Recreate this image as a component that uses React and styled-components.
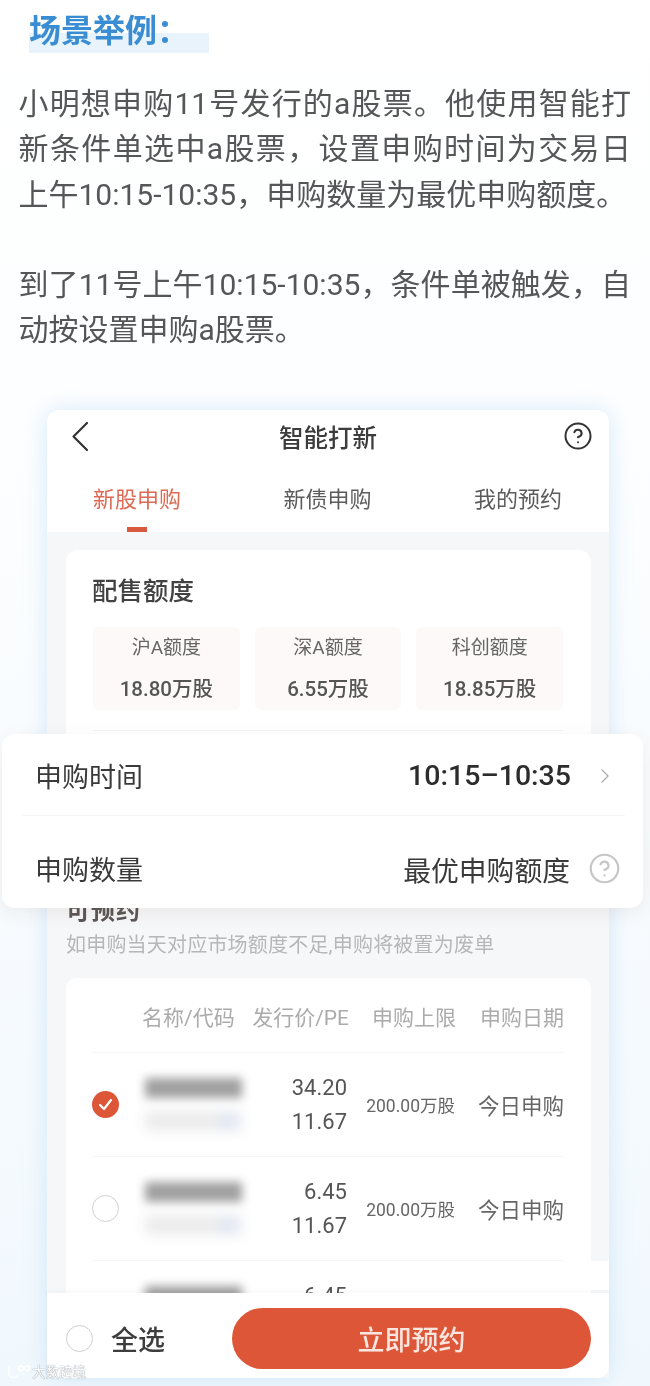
import React from 'react';
import styled, { createGlobalStyle } from 'styled-components';
import { CircleHelp, ChevronRight } from 'lucide-react';

const Global = createGlobalStyle`
  html, body { margin: 0; padding: 0; background: #fff; }
  * { box-sizing: border-box; }
`;

const Page = styled.div`
  position: relative;
  width: 650px;
  height: 1386px;
  overflow: hidden;
  padding-top: 14px;
  font-family: Roboto, "Noto Sans CJK SC", "Noto Sans", sans-serif;
  background: linear-gradient(#ffffff 0, #fdfeff 380px, #f1f8fd 100%);
  filter: blur(0.45px);
`;

const Heading = styled.h2`
  margin: 0 0 0 29px;
  width: 180px;
  height: 39px;
  font-size: 32px;
  line-height: 34px;
  font-weight: 700;
  color: #3a8dd2;
  background: linear-gradient(transparent 19px, #e9f3fb 19px);
`;

const Copy = styled.div`
  margin: 28px 0 0 18.5px;
  width: 612.5px;
  font-size: 30px;
  line-height: 45.3px;
  text-align: justify;
  color: #555658;
`;

const Para = styled.p`
  margin: 0 0 45.3px;
`;

const Phone = styled.div`
  position: relative;
  margin: 57.4px 0 0 47px;
  width: 562px;
  height: 968px;
  display: flex;
  flex-direction: column;
  background: #fff;
  border-radius: 12px;
  box-shadow: 0 0 22px rgba(160, 205, 242, 0.42);
`;

const NavBar = styled.div`
  height: 52px;
  flex: none;
  display: flex;
  align-items: center;
  justify-content: space-between;
  padding: 0 16px 0 24px;
  color: #333;
`;

const NavTitle = styled.div`
  font-size: 24.5px;
  font-weight: 500;
  color: #3c3c3c;
  margin-left: 4px;
`;

const Tabs = styled.div`
  height: 70px;
  flex: none;
  display: flex;
  justify-content: space-between;
  padding: 23px 47px 0 46px;
`;

const Tab = styled.div`
  display: flex;
  flex-direction: column;
  align-items: center;
  gap: 12px;
  font-size: 22px;
  line-height: 30px;
  color: ${p => (p.$active ? '#dc6a55' : '#5c5c5c')};
  &::after {
    content: '';
    width: 20px;
    height: 5px;
    background: ${p => (p.$active ? '#d9593f' : 'transparent')};
  }
`;

const Body = styled.div`
  flex: 1;
  min-height: 0;
  overflow: hidden;
  padding: 18px 18px 0 19px;
  background: #f6f7f9;
`;

const QuotaCard = styled.section`
  height: 330px;
  padding: 24px 28px 0 27px;
  background: #fff;
  border-radius: 12px;
`;

const CardTitle = styled.div`
  font-size: 25.5px;
  line-height: 34px;
  font-weight: 500;
  color: #424242;
  margin-left: -1px;
`;

const QuotaGrid = styled.div`
  margin-top: 19px;
  display: grid;
  grid-template-columns: repeat(3, 1fr);
  gap: 15px;
  padding-bottom: 20px;
  border-bottom: 1px solid #f3f3f3;
`;

const QuotaCell = styled.div`
  height: 83px;
  display: flex;
  flex-direction: column;
  align-items: center;
  gap: 14px;
  padding-top: 7px;
  background: #fef9f9;
  border-radius: 6px;
`;

const QuotaLabel = styled.div`
  font-size: 19px;
  line-height: 27px;
  color: #666;
`;

const QuotaValue = styled.div`
  font-size: 20.5px;
  line-height: 28px;
  font-weight: 500;
  color: #555;
`;

const SectionTitle = styled.div`
  margin-top: 14px;
  font-size: 24px;
  line-height: 34px;
  font-weight: 700;
  color: #5b5555;
  letter-spacing: 1px;
`;

const Note = styled.div`
  margin-top: 3px;
  font-size: 20px;
  line-height: 28px;
  letter-spacing: 0.2px;
  color: #b7b7b7;
`;

const TableCard = styled.section`
  margin-top: 19px;
  background: #fff;
  border-radius: 10px;
  padding: 0 27px 0 26px;
`;

const columns = '50px 105px 102px 107px 108px';

const HeadRow = styled.div`
  height: 75px;
  padding-top: 25px;
  display: grid;
  grid-template-columns: ${columns};
  font-size: 21px;
  line-height: 30px;
  color: #ababab;
  border-bottom: 1px solid #f7f7f7;
`;

const HeadCell = styled.div`
  grid-column: ${p => p.$col};
  text-align: ${p => (p.$left ? 'left' : 'right')};
  white-space: nowrap;
`;

const Row = styled.div`
  height: 104px;
  display: grid;
  grid-template-columns: ${columns};
  align-items: center;
  border-bottom: 1px solid #f5f5f5;
`;

const Radio = styled.span`
  width: 27px;
  height: 27px;
  flex: none;
  display: flex;
  align-items: center;
  justify-content: center;
  border-radius: 50%;
  border: ${p => (p.$checked ? 'none' : '1px solid #cfcfcf')};
  background: ${p => (p.$checked ? '#dc5637' : '#fff')};
`;

const NameBlur = styled.div`
  display: flex;
  flex-direction: column;
  gap: 13px;
  padding: 0 5px 0 3px;
`;

const NameBar = styled.div`
  height: 20px;
  background: #a0a0a0;
  filter: blur(5px);
`;

const CodeBar = styled.div`
  height: 20px;
  background: linear-gradient(90deg, #ececec 70%, #e0e7f5 88%, #eeeeee);
  filter: blur(6px);
`;

const Price = styled.div`
  text-align: right;
  padding-right: 2px;
  font-size: 22px;
  line-height: 34px;
  color: #555;
`;

const Limit = styled.div`
  text-align: right;
  padding-right: 1px;
  font-size: 17.5px;
  color: #666;
  white-space: nowrap;
`;

const DateCell = styled.div`
  text-align: right;
  font-size: 21.5px;
  color: #666;
`;

const BottomBar = styled.div`
  position: absolute;
  left: 0;
  right: 0;
  bottom: 0;
  height: 85px;
  display: flex;
  align-items: center;
  justify-content: space-between;
  padding: 6px 18px 0 19px;
  background: #fff;
  border-radius: 0 0 12px 12px;
  box-shadow: 0 -3px 6px rgba(0, 0, 0, 0.025);
  &::before {
    content: '';
    position: absolute;
    right: 0;
    top: -32px;
    width: 18px;
    height: 29px;
    background: #fff;
  }
`;

const SelectAll = styled.div`
  display: flex;
  align-items: center;
  gap: 18px;
  font-size: 27px;
  font-weight: 500;
  color: #3d3d3d;
`;

const Primary = styled.button`
  width: 359px;
  height: 61px;
  border: 0;
  border-radius: 31px;
  background: #dc5637;
  color: #fbe6df;
  font-family: inherit;
  font-size: 27px;
  font-weight: 500;
`;

const Overlay = styled.div`
  position: absolute;
  left: 2px;
  top: 734px;
  width: 641px;
  height: 174px;
  padding: 0 18px 0 20px;
  background: #fff;
  border-radius: 13px;
  box-shadow: 0 5px 18px rgba(120, 90, 70, 0.09);
`;

const SettingRow = styled.div`
  height: ${p => (p.$first ? '82px' : '92px')};
  display: flex;
  align-items: center;
  padding: ${p => (p.$first ? '2px 0 0 13px' : '13px 4px 0 13px')};
  border-bottom: ${p => (p.$first ? '1px solid #f5f5f5' : 'none')};
  font-size: 27px;
  color: #3a3a3a;
`;

const SettingLabel = styled.div`
  flex: 1;
`;

const SettingValue = styled.div`
  font-size: ${p => (p.$time ? '28.5px' : '27.8px')};
  font-weight: ${p => (p.$time ? 500 : 400)};
  color: ${p => (p.$time ? '#2c2c2c' : '#3a3a3a')};
  margin-right: ${p => (p.$time ? '22px' : '18px')};
`;

const Watermark = styled.div`
  position: absolute;
  left: 7px;
  bottom: 6px;
  display: flex;
  align-items: center;
  gap: 1px;
  font-size: 13.5px;
  line-height: 16px;
  color: #fff;
  text-shadow: 0 0 1px #8f9aa3, 0 0 1px #8f9aa3;
`;

const rows = [
  { checked: true, price: '34.20' },
  { price: '6.45' },
  { price: '6.45' },
];

const Check = () => (
  <svg width="17" height="15" viewBox="0 0 17 15" fill="none">
    <path d="M3 8l4 4L14 3" stroke="#fff" strokeWidth="2.2" strokeLinecap="round" strokeLinejoin="round" />
  </svg>
);

const Back = () => (
  <svg width="18" height="31" viewBox="0 0 18 31" fill="none">
    <path d="M16 2L2.5 15.5 16 29" stroke="#333" strokeWidth="2.2" strokeLinecap="round" strokeLinejoin="round" />
  </svg>
);

export default function App() {
  return (
    <>
      <Global />
      <Page>
        <Heading>场景举例：</Heading>
        <Copy>
          <Para>小明想申购11号发行的a股票。他使用智能打新条件单选中a股票，设置申购时间为交易日上午10:15-10:35，申购数量为最优申购额度。</Para>
          <Para>到了11号上午10:15-10:35，条件单被触发，自动按设置申购a股票。</Para>
        </Copy>
        <Phone>
          <NavBar>
            <Back />
            <NavTitle>智能打新</NavTitle>
            <CircleHelp size={30} strokeWidth={1.6} />
          </NavBar>
          <Tabs>
            <Tab $active>新股申购</Tab>
            <Tab>新债申购</Tab>
            <Tab>我的预约</Tab>
          </Tabs>
          <Body>
            <QuotaCard>
              <CardTitle>配售额度</CardTitle>
              <QuotaGrid>
                <QuotaCell><QuotaLabel>沪A额度</QuotaLabel><QuotaValue>18.80万股</QuotaValue></QuotaCell>
                <QuotaCell><QuotaLabel>深A额度</QuotaLabel><QuotaValue>6.55万股</QuotaValue></QuotaCell>
                <QuotaCell><QuotaLabel>科创额度</QuotaLabel><QuotaValue>18.85万股</QuotaValue></QuotaCell>
              </QuotaGrid>
            </QuotaCard>
            <SectionTitle>可预约</SectionTitle>
            <Note>如申购当天对应市场额度不足,申购将被置为废单</Note>
            <TableCard>
              <HeadRow>
                <HeadCell $col={2} $left>名称/代码</HeadCell>
                <HeadCell $col={3}>发行价/PE</HeadCell>
                <HeadCell $col={4}>申购上限</HeadCell>
                <HeadCell $col={5}>申购日期</HeadCell>
              </HeadRow>
              {rows.map((r, i) => (
                <Row key={i}>
                  <Radio $checked={r.checked}>{r.checked && <Check />}</Radio>
                  <NameBlur>
                    <NameBar />
                    <CodeBar />
                  </NameBlur>
                  <Price>{r.price}<br />11.67</Price>
                  <Limit>200.00万股</Limit>
                  <DateCell>今日申购</DateCell>
                </Row>
              ))}
            </TableCard>
          </Body>
          <BottomBar>
            <SelectAll><Radio />全选</SelectAll>
            <Primary>立即预约</Primary>
          </BottomBar>
        </Phone>
        <Overlay>
          <SettingRow $first>
            <SettingLabel>申购时间</SettingLabel>
            <SettingValue $time>10:15–10:35</SettingValue>
            <ChevronRight size={24} strokeWidth={1.2} color="#aaa" style={{ marginRight: 8 }} />
          </SettingRow>
          <SettingRow>
            <SettingLabel>申购数量</SettingLabel>
            <SettingValue>最优申购额度</SettingValue>
            <CircleHelp size={33} strokeWidth={1.6} color="#c6c6c6" />
          </SettingRow>
        </Overlay>
        <Watermark>
          <svg width="24" height="16" viewBox="0 0 26 16" fill="none" stroke="#fff" strokeWidth="1.6">
            <path d="M2 2v7c0 3 2 5 5 5 2 0 4-1 5-3" />
            <circle cx="15" cy="4" r="2.6" />
            <circle cx="22" cy="4" r="2.6" />
          </svg>
          大数跨境
        </Watermark>
      </Page>
    </>
  );
}
